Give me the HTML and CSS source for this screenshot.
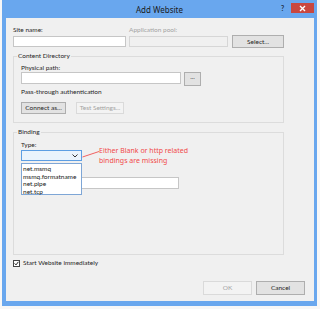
FILE: index.html
```html
<!DOCTYPE html>
<html>
<head>
    <meta charset="UTF-8">
    <title>Add Website</title>
    <link rel="stylesheet" href="styles.css">
</head>
<body>
    <div class="window">
        <div class="titlebar">
            <span class="title">Add Website</span>
            <span class="help">?</span>
            <span class="close">
                <svg width="7" height="7" viewBox="0 0 7 7"><path d="M1 1 L6 6 M6 1 L1 6" stroke="#fff" stroke-width="1.4"/></svg>
            </span>
        </div>
        <div class="client">
            <div class="site-row">
                <div class="field site-name">
                    <div class="label">Site name:</div>
                    <div class="textbox"></div>
                </div>
                <div class="field app-pool">
                    <div class="label disabled">Application pool:</div>
                    <div class="textbox disabled"></div>
                </div>
                <div class="btn select">Select...</div>
            </div>

            <fieldset class="group content-dir">
                <legend>Content Directory</legend>
                <div class="label">Physical path:</div>
                <div class="path-row">
                    <div class="textbox path"></div>
                    <div class="btn browse">...</div>
                </div>
                <div class="label auth">Pass-through authentication</div>
                <div class="btn-row">
                    <div class="btn connect">Connect as...</div>
                    <div class="btn test disabled">Test Settings...</div>
                </div>
            </fieldset>

            <fieldset class="group binding">
                <legend>Binding</legend>
                <div class="label type-label">Type:</div>
                <div class="type-wrap">
                    <div class="combo">
                        <svg class="chevron" width="6" height="4" viewBox="0 0 6 4"><path d="M0.5 0.5 L3 3 L5.5 0.5" fill="none" stroke="#333" stroke-width="1"/></svg>
                    </div>
                    <ul class="dropdown">
                        <li>net.msmq</li>
                        <li>msmq.formatname</li>
                        <li>net.pipe</li>
                        <li>net.tcp</li>
                    </ul>
                    <svg class="pointer" width="18" height="8" viewBox="0 0 18 8"><path d="M0.5 7 L17 1.5" stroke="#f05050" stroke-width="0.9"/></svg>
                    <div class="note">Either Blank or http related<br>bindings are missing</div>
                </div>
                <div class="textbox host"></div>
            </fieldset>

            <div class="check-row">
                <span class="checkbox">
                    <svg width="5" height="5" viewBox="0 0 5 5"><path d="M0.6 2.4 L2 3.9 L4.4 0.8" fill="none" stroke="#222" stroke-width="1"/></svg>
                </span>
                Start Website immediately
            </div>

            <div class="actions">
                <div class="btn ok disabled">OK</div>
                <div class="btn cancel">Cancel</div>
            </div>
        </div>
    </div>
</body>
</html>
```

FILE: styles.css
```css
body {
    margin: 0;
    background-color: #f7f7f7;
    font-family: Lato, "Noto Sans", sans-serif;
    font-size: 6.5px;
    color: #262626;
}
.window {
    margin-left: 2px;
    width: 315px;
    height: 306px;
    background-color: #69a7ee;
    display: flex;
    flex-direction: column;
}
.titlebar {
    height: 18px;
    display: flex;
    align-items: flex-start;
    position: relative;
}
.title {
    flex: 1;
    text-align: center;
    font-family: "Noto Sans", sans-serif;
    font-size: 8px;
    line-height: 10px;
    margin-top: 5px;
    color: #1c1c1c;
}
.help {
    position: absolute;
    left: 279px;
    top: 4px;
    font-size: 7px;
    font-weight: bold;
    color: #1f2f45;
}
.close {
    position: absolute;
    left: 289px;
    top: 3px;
    width: 23px;
    height: 10px;
    background-color: #c9473f;
    display: flex;
    justify-content: center;
    align-items: center;
}
.close svg {
    display: block;
}
.client {
    flex: 1;
    margin: 0 3px 5px 4px;
    background-color: #f0f0f0;
    padding: 8px 0 6px 7px;
    display: flex;
    flex-direction: column;
}
.label {
    line-height: 8px;
    height: 8px;
    white-space: nowrap;
}
.disabled {
    color: #a3a3a3;
}
.textbox {
    box-sizing: border-box;
    height: 11px;
    background-color: #fff;
    border: 1px solid #c6c6c6;
}
.textbox.disabled {
    background-color: #f0f0f0;
    border-color: #d6d6d6;
}
.btn {
    box-sizing: border-box;
    height: 13px;
    background-color: #e2e2e2;
    border: 1px solid #aeaeae;
    display: flex;
    justify-content: center;
    align-items: center;
    line-height: 8px;
    white-space: nowrap;
}
.btn.disabled {
    background-color: #f3f3f3;
    border-color: #dadada;
}
.site-row {
    display: flex;
    align-items: flex-end;
}
.site-row .field .textbox {
    margin-top: 2px;
}
.site-name {
    width: 113px;
}
.app-pool {
    width: 99px;
    margin-left: 3px;
}
.btn.select {
    width: 52px;
    margin-left: 4px;
    margin-bottom: -1px;
}
.group {
    box-sizing: border-box;
    width: 271px;
    margin: 5px 0 0 0;
    border: 1px solid #dcdcdc;
    padding: 4px 7px 8px 7px;
    min-width: 0;
}
.group legend {
    padding: 0 1px;
    margin-left: -4px;
    line-height: 8px;
}
.path-row {
    display: flex;
    align-items: flex-start;
}
.textbox.path {
    width: 160px;
    height: 12px;
}
.btn.browse {
    width: 17px;
    height: 14px;
    margin-left: 3px;
    align-items: flex-end;
    padding-bottom: 4px;
}
.auth {
    margin-top: 2px;
}
.btn-row {
    display: flex;
    margin-top: 6px;
}
.btn-row .btn {
    height: 12px;
}
.btn.connect {
    width: 45px;
}
.btn.test {
    width: 48px;
    margin-left: 10px;
}
.binding {
    padding-top: 5px;
    padding-bottom: 65px;
}
.type-wrap {
    position: relative;
    margin-top: 1px;
}
.combo {
    box-sizing: border-box;
    width: 61px;
    height: 11px;
    background-color: #eaf3fc;
    border: 1px solid #5d9ee3;
    display: flex;
    justify-content: flex-end;
    align-items: center;
    padding-right: 3px;
}
.chevron {
    display: block;
}
.dropdown {
    position: absolute;
    left: 0;
    top: 13px;
    z-index: 2;
    box-sizing: border-box;
    width: 61px;
    height: 32px;
    margin: 0;
    padding: 1px 0 0 1px;
    list-style: none;
    background-color: #fff;
    border: 1px solid #7ea6d6;
}
.dropdown li {
    line-height: 7.6px;
    height: 7.6px;
    white-space: nowrap;
    color: #1a1a1a;
}
.pointer {
    position: absolute;
    left: 61px;
    top: 0;
}
.note {
    position: absolute;
    left: 78px;
    top: -4px;
    font-family: "Noto Sans", sans-serif;
    font-size: 7px;
    color: #f04a4a;
    line-height: 10px;
    white-space: nowrap;
}
.textbox.host {
    margin-top: 16px;
    width: 158px;
    height: 12px;
}
.check-row {
    display: flex;
    align-items: center;
    margin-top: 4px;
    line-height: 8px;
}
.checkbox {
    box-sizing: border-box;
    width: 7px;
    height: 7px;
    border: 1px solid #444;
    background-color: #fff;
    margin-right: 3px;
    display: flex;
    justify-content: center;
    align-items: center;
}
.checkbox svg {
    display: block;
}
.actions {
    margin-top: auto;
    display: flex;
    justify-content: flex-end;
    padding-right: 9px;
}
.actions .btn {
    width: 49px;
    height: 14px;
}
.btn.cancel {
    margin-left: 4px;
}
```
